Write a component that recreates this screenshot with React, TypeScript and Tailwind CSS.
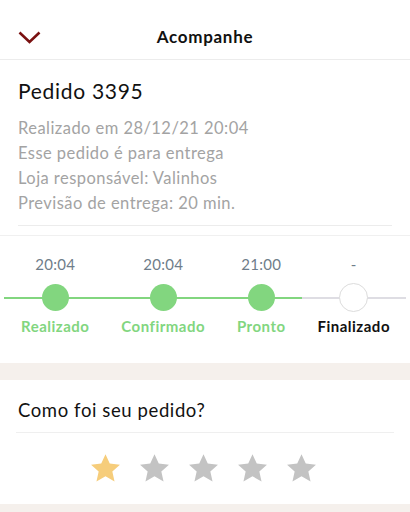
import React from "react";

const font = { fontFamily: "Lato, 'Noto Sans', sans-serif" };

function Star({ color }: { color: string }) {
  return (
    <svg width="31" height="30" viewBox="0 0 24 23" fill={color}>
      <path d="M12 0.8l3.3 7.3 7.9 0.8-5.9 5.3 1.7 7.8L12 17.9l-7 4.1 1.7-7.8L0.8 8.9l7.9-0.8z" />
    </svg>
  );
}

const steps = [
  { time: "20:04", label: "Realizado", done: true },
  { time: "20:04", label: "Confirmado", done: true },
  { time: "21:00", label: "Pronto", done: true },
  { time: "-", label: "Finalizado", done: false },
];

export default function App() {
  return (
    <div className="w-[410px] h-[512px] bg-white overflow-hidden" style={font}>
      <div className="h-[60px] pt-[14px] grid grid-cols-[60px_1fr_60px] items-center border-b border-[#ececec]">
        <div className="pl-[18px] pt-[2px]">
          <svg width="23" height="13" viewBox="0 0 23 13" fill="none">
            <path d="M1.5 1.5l10 9.5 10-9.5" stroke="#7a1111" strokeWidth="2.6" />
          </svg>
        </div>
        <div className="text-center text-[17px] font-bold tracking-[0.7px] text-[#111]">Acompanhe</div>
        <div />
      </div>

      <div className="px-[18px] pt-[17px]">
        <div className="text-[21px] tracking-[0.7px] text-[#111] leading-[28px]">Pedido 3395</div>
        <div className="mt-[11px] text-[16.5px] tracking-[0.45px] leading-[25px] text-[#a3a3a3]">
          <div>Realizado em 28/12/21 20:04</div>
          <div>Esse pedido é para entrega</div>
          <div>Loja responsável: Valinhos</div>
          <div>Previsão de entrega: 20 min.</div>
        </div>
        <div className="mt-[9px] border-t border-[#ececec]" />
      </div>
      <div className="mt-[9px] border-t border-[#f0f0f0]" />

      <div className="relative h-[127px] pt-[18px]">
        <div className="absolute left-[4px] w-[298px] top-[61px] h-[2px] bg-[#82d67f]" />
        <div className="absolute left-[302px] w-[104px] top-[61px] h-[2px] bg-[#dedde3]" />
        <div className="relative flex justify-between pl-[21px] pr-[20px]">
          {steps.map((s) => (
            <div key={s.label} className="flex flex-col items-center">
              <div className="text-[15px] tracking-[0.3px] leading-[20px] text-[#6f7d8a]">{s.time}</div>
              <div
                className={
                  s.done
                    ? "mt-[10px] w-[27px] h-[27px] rounded-full bg-[#82d67f]"
                    : "mt-[9px] w-[29px] h-[29px] rounded-full bg-white border border-[#dcdcdc]"
                }
              />
              <div
                className={
                  s.done
                    ? "mt-[5px] text-[15px] tracking-[0.5px] font-bold leading-[20px] text-[#82d67f]"
                    : "mt-[4px] text-[15px] tracking-[0.5px] font-bold leading-[20px] text-[#111]"
                }
              >
                {s.label}
              </div>
            </div>
          ))}
        </div>
      </div>

      <div className="h-[17px] bg-[#f5f0ec]" />

      <div className="px-[16px] pt-[17px]">
        <div className="text-[18.5px] tracking-[0.6px] leading-[26px] text-[#111] pl-[2px]">Como foi seu pedido?</div>
        <div className="mt-[9px] border-t border-[#efefef]" />
        <div className="flex justify-center gap-[18px] pt-[20px] pr-[4px]">
          <Star color="#f6cd7b" />
          <Star color="#c3c3c3" />
          <Star color="#c3c3c3" />
          <Star color="#c3c3c3" />
          <Star color="#c3c3c3" />
        </div>
      </div>
      <div className="mt-[21px] h-[20px] bg-[#f5f0ec]" />
    </div>
  );
}
